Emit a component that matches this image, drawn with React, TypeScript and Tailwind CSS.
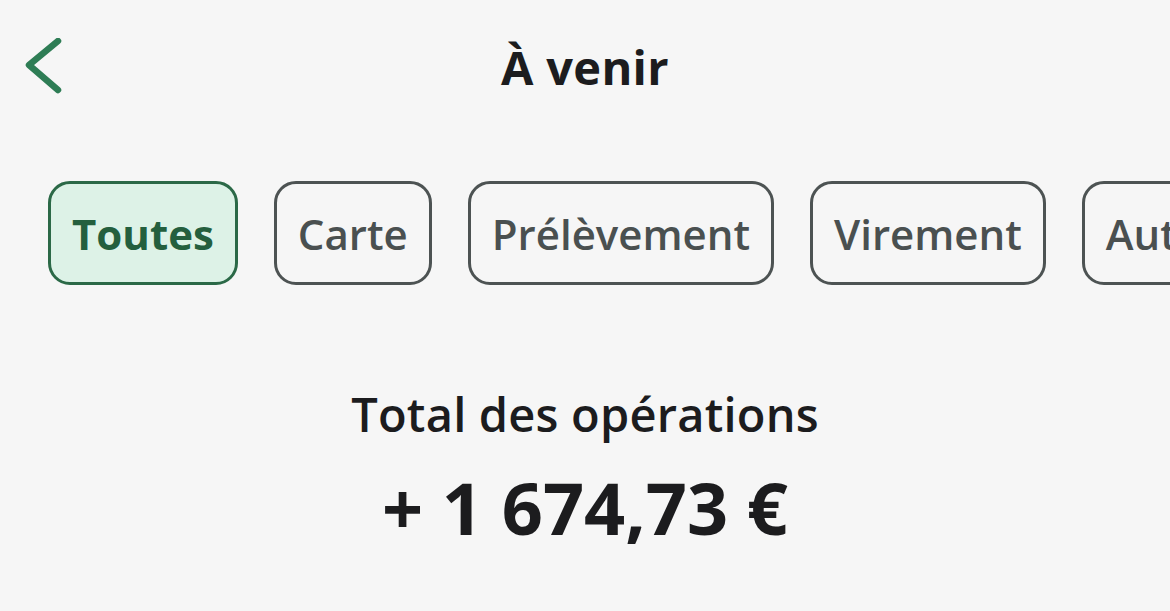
const filters = [
  { label: 'Toutes', active: true },
  { label: 'Carte', active: false },
  { label: 'Prélèvement', active: false },
  { label: 'Virement', active: false },
  { label: 'Autres', active: false },
];

export default function App() {
  return (
    <div
      className="w-[1170px] h-[611px] overflow-hidden bg-[#f6f6f6] text-[#1c1c1e]"
      style={{ fontFamily: '"Open Sans", "Noto Sans", sans-serif' }}
    >
      {/* Header */}
      <header className="grid grid-cols-[1fr_auto_1fr] pt-[36px]">
        <button className="justify-self-start ml-[24px] mt-[2px] w-[40px] h-[60px]" aria-label="Retour">
          <svg width="40" height="60" viewBox="0 0 40 60" fill="none">
            <path
              d="M34 3 L5 27 L34 52"
              stroke="#2e7d55"
              strokeWidth="6.5"
              strokeLinecap="round"
              strokeLinejoin="round"
            />
          </svg>
        </button>
        <h1 className="text-[47px] leading-[62px] font-bold tracking-[0.3px]">À venir</h1>
        <div />
      </header>

      {/* Filters */}
      <div className="flex gap-[36px] pl-[48px] mt-[83px] whitespace-nowrap">
        {filters.map(f => (
          <div
            key={f.label}
            className={
              f.active
                ? 'shrink-0 flex items-center h-[104px] px-[21px] rounded-[22px] border-[3px] border-[#2b6947] bg-[#ddf2e7] text-[#245f3e] text-[42px] font-bold'
                : 'shrink-0 flex items-center h-[104px] px-[21px] rounded-[22px] border-[3px] border-[#4d5353] text-[#4a5050] text-[42px] font-semibold'
            }
          >
            {f.label}
          </div>
        ))}
      </div>

      {/* Total */}
      <div className="flex flex-col items-center mt-[96px]">
        <p className="text-[47px] leading-[66px] font-semibold tracking-[0.2px]">Total des opérations</p>
        <p className="mt-[11px] text-[72px] leading-[98px] font-bold">+ 1 674,73 €</p>
      </div>
    </div>
  );
}
